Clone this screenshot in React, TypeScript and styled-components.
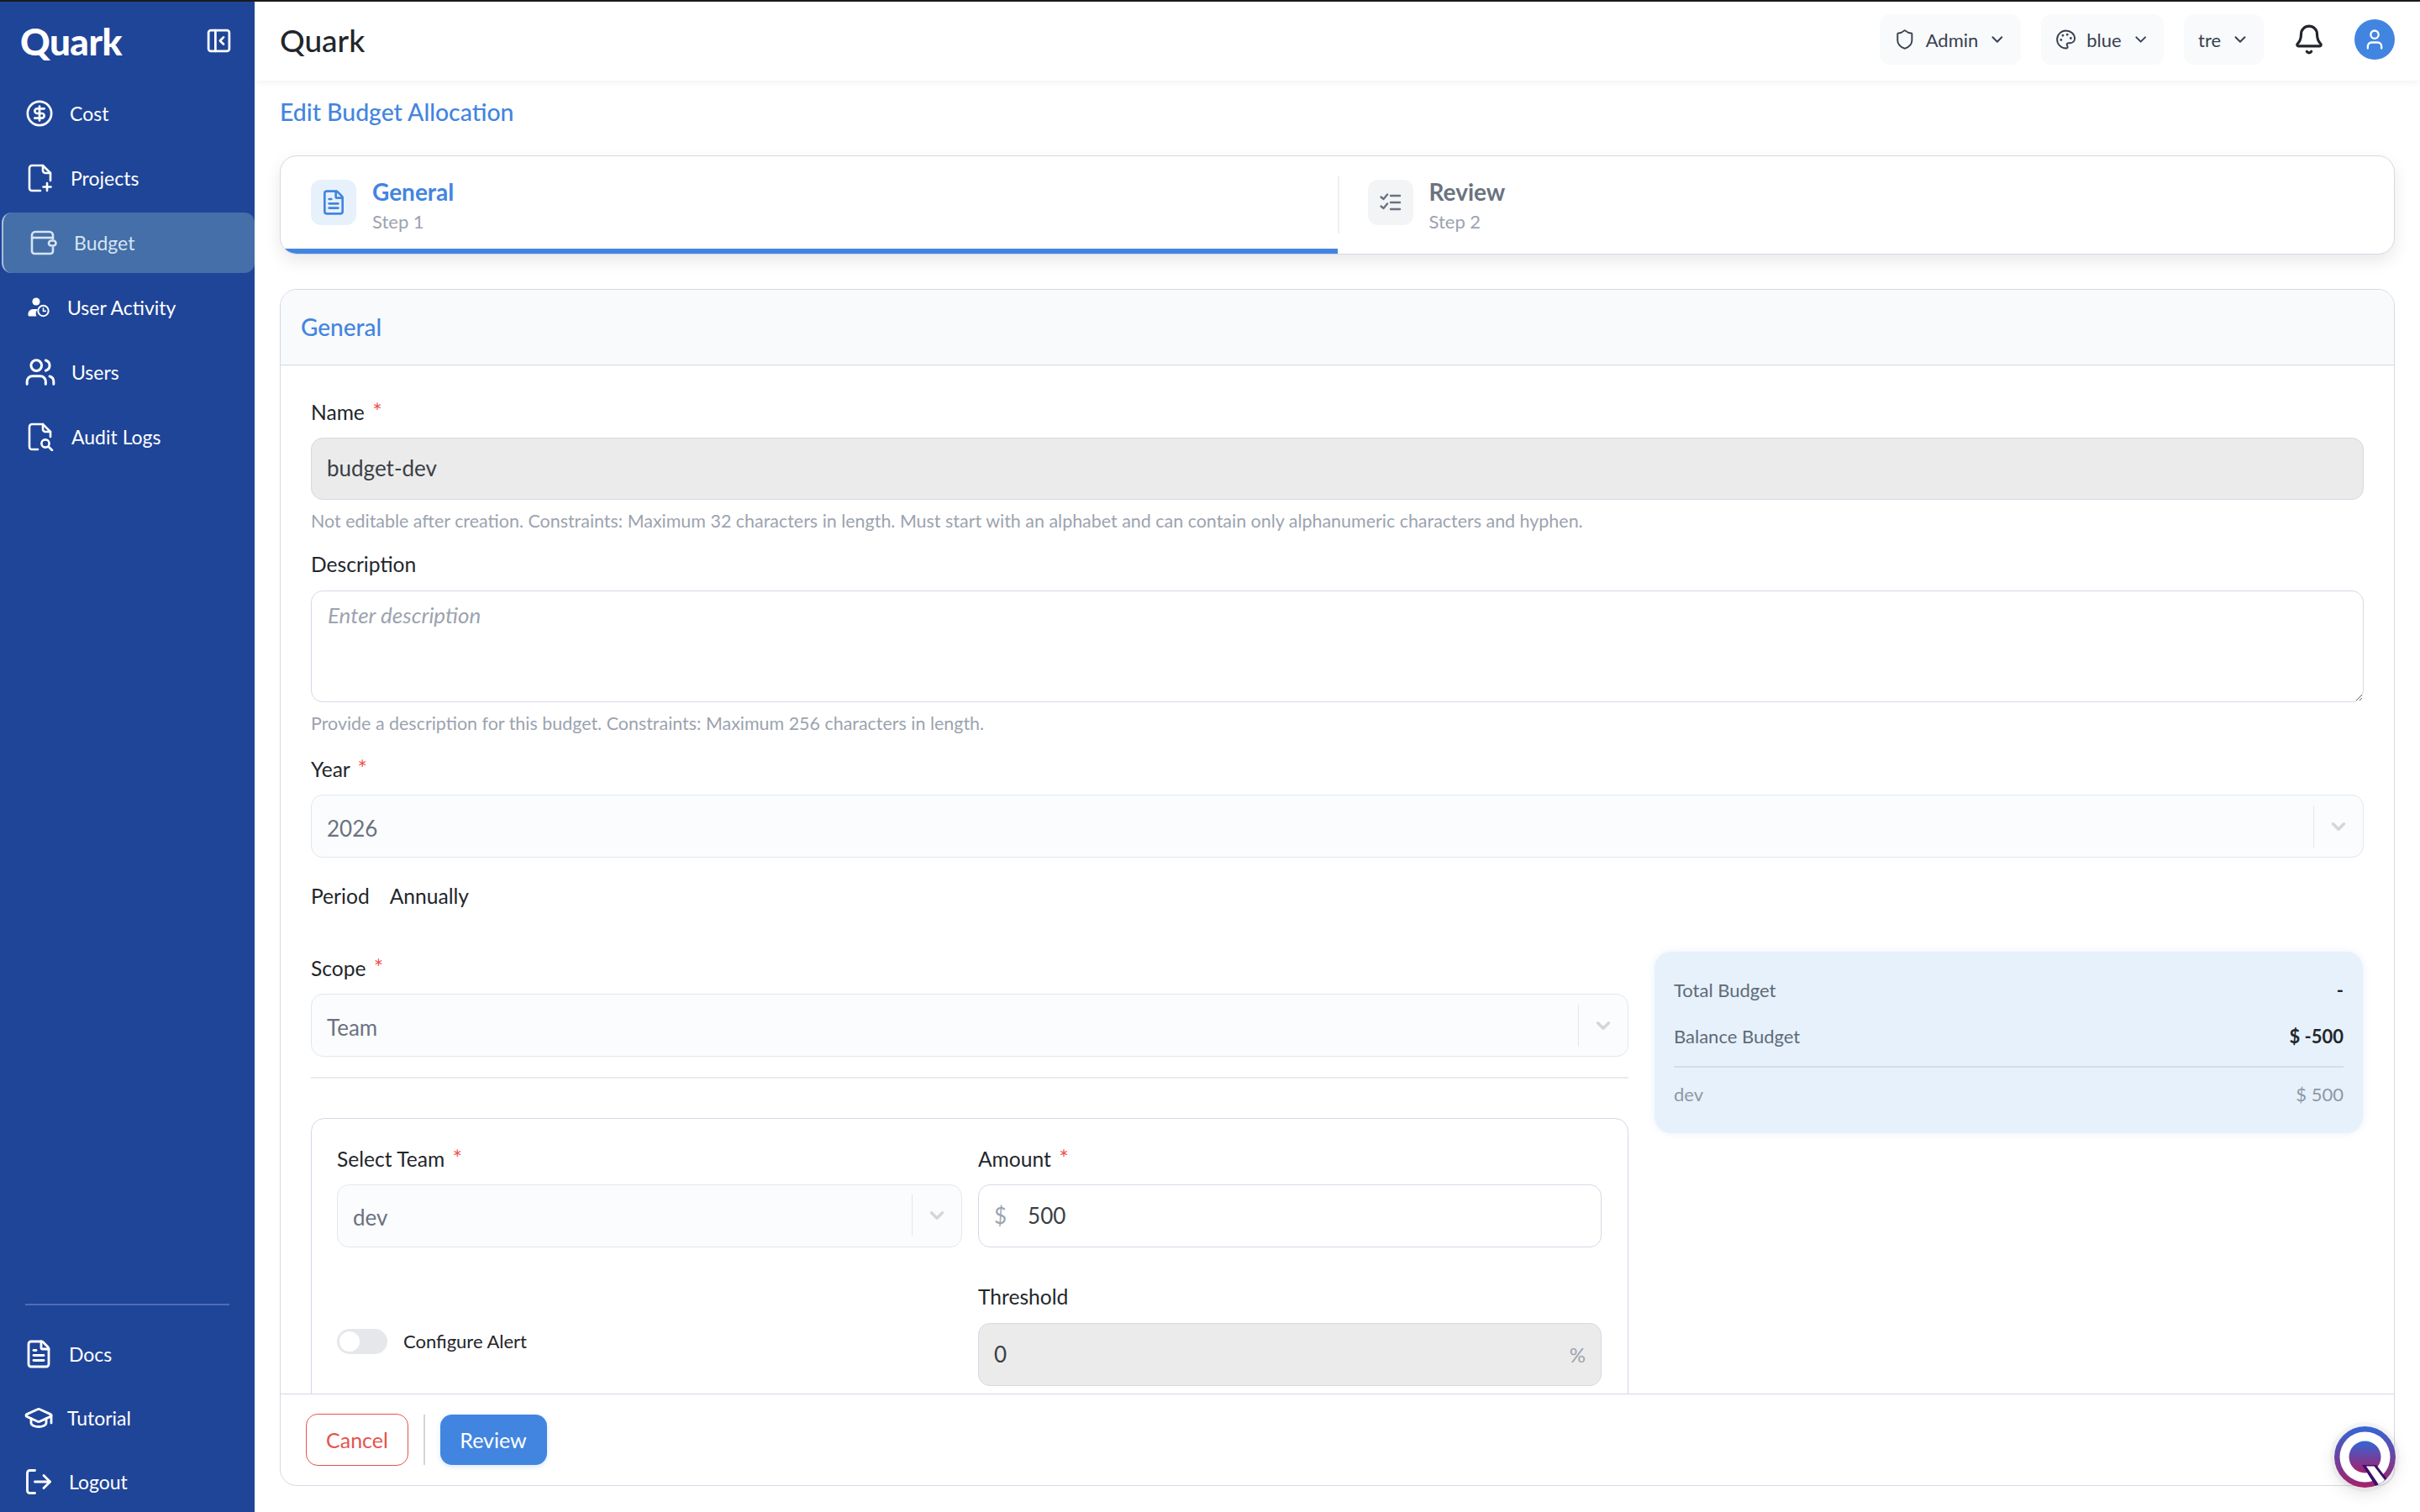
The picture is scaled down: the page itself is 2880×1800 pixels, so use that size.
import React from 'react'
import styled, { createGlobalStyle } from 'styled-components'
import {
  Bell,
  ChevronDown,
  CircleDollarSign,
  FileText,
  GraduationCap,
  LogOut,
  Palette,
  PanelLeftClose,
  Shield,
  User,
  Users
} from 'lucide-react'

const Colors = {
  navy: '#1f4598',
  blue: '#4285e0',
  border: '#d3d9e5',
  softBorder: '#e3e7ee',
  ink: '#22262b',
  disabled: '#ebebeb',
  muted: '#9ca3af',
  required: '#ef5350'
}

const GlobalStyle = createGlobalStyle`
  html, body {
    margin: 0;
    height: 100%;
    overflow: hidden;
    background: #fff;
  }
  body, input, textarea {
    font-family: 'Lato', 'Noto Sans', sans-serif;
  }
  * {
    box-sizing: border-box;
  }
`

/* icons the package has no match for */
const FilePlusIcon = () => (
  <svg width='30' height='34' viewBox='0 0 30 34' fill='none' stroke='currentColor' strokeWidth='2.6' strokeLinecap='round' strokeLinejoin='round'>
    <path d='M15 32H5a3 3 0 0 1-3-3V5a3 3 0 0 1 3-3h13l9 9v9' />
    <path d='M18 2v6a3 3 0 0 0 3 3h6' />
    <path d='M23 23v9M18.5 27.5h9' />
  </svg>
)

const FileSearchIcon = () => (
  <svg width='31' height='34' viewBox='0 0 31 34' fill='none' stroke='currentColor' strokeWidth='2.6' strokeLinecap='round' strokeLinejoin='round'>
    <path d='M12 32H5a3 3 0 0 1-3-3V5a3 3 0 0 1 3-3h13l9 9v6' />
    <path d='M18 2v6a3 3 0 0 0 3 3h6' />
    <circle cx='21' cy='25' r='4.6' />
    <path d='M25 29l4 4' />
  </svg>
)

const WalletIcon = () => (
  <svg width='32' height='30' viewBox='0 0 32 30' fill='none' stroke='currentColor' strokeWidth='2.6' strokeLinejoin='round'>
    <path d='M27 11V6a4 4 0 0 0-4-4H6a4 4 0 0 0-4 4v19a3 3 0 0 0 3 3h19a3 3 0 0 0 3-3v-5' />
    <path d='M2 9h25' />
    <rect x='22' y='12.5' width='8.5' height='6' rx='3' />
  </svg>
)

const UserClockIcon = () => (
  <svg width='26' height='24' viewBox='0 0 26 24' fill='none'>
    <circle cx='10' cy='5' r='4.6' fill='currentColor' />
    <path d='M0.5 21a6 6 0 0 1 6-7h5.5a8 8 0 0 0-1.6 8.5H2A1.5 1.5 0 0 1 0.5 21z' fill='currentColor' />
    <circle cx='18.5' cy='16' r='6.2' stroke='currentColor' strokeWidth='2' />
    <path d='M18.5 12.8V16.4h2.8' stroke='currentColor' strokeWidth='1.6' strokeLinecap='round' strokeLinejoin='round' />
  </svg>
)

const ChecklistIcon = () => (
  <svg width='26' height='22' viewBox='0 0 26 22' fill='none' stroke='currentColor' strokeWidth='2.4' strokeLinecap='round' strokeLinejoin='round'>
    <path d='M1.5 4.5l3 2.5 4.5-5.5' />
    <path d='M1.5 15.5l3 2.5 4.5-5.5' />
    <path d='M13 3h11M13 11h11M13 19h11' />
  </svg>
)

const QuarkBadge = () => (
  <svg width='73' height='73' viewBox='0 0 73 73'>
    <defs>
      <linearGradient id='quarkFill' x1='0' y1='0' x2='0' y2='1'>
        <stop offset='0' stopColor='#3366d6' />
        <stop offset='1' stopColor='#a5216b' />
      </linearGradient>
      <clipPath id='quarkClip'>
        <circle cx='36.5' cy='36.5' r='36.5' />
      </clipPath>
    </defs>
    <circle cx='36.5' cy='36.5' r='36.5' fill='url(#quarkFill)' />
    <circle cx='36.5' cy='36.5' r='30' fill='#fff' />
    <circle cx='36.5' cy='36.5' r='19' fill='url(#quarkFill)' />
    <g clipPath='url(#quarkClip)'>
      <path d='M33 46h17l13 17-5 6-7 5z' fill='#3b0f6b' />
      <path d='M38 47.5h9.5L60 64l-6 7z' fill='#fff' />
    </g>
  </svg>
)

const mainNav = [
  { label: 'Cost', icon: <CircleDollarSign size={34} strokeWidth={1.9} />, pad: 30, slot: 34, gap: 19 },
  { label: 'Projects', icon: <FilePlusIcon />, pad: 33, slot: 30, gap: 21 },
  { label: 'Budget', icon: <WalletIcon />, pad: 32, slot: 32, gap: 20, active: true },
  { label: 'User Activity', icon: <UserClockIcon />, pad: 33, slot: 26, gap: 21 },
  { label: 'Users', icon: <Users size={38} strokeWidth={1.9} />, pad: 29, slot: 38, gap: 18 },
  { label: 'Audit Logs', icon: <FileSearchIcon />, pad: 33, slot: 31, gap: 21 }
]

const footerNav = [
  { label: 'Docs', icon: <FileText size={36} strokeWidth={1.9} />, pad: 28, slot: 36, gap: 18 },
  { label: 'Tutorial', icon: <GraduationCap size={36} strokeWidth={1.9} />, pad: 28, slot: 36, gap: 16 },
  { label: 'Logout', icon: <LogOut size={36} strokeWidth={1.9} />, pad: 28, slot: 36, gap: 18 }
]

function SelectBox({ value }: { value: string }) {
  return (
    <SelectFrame>
      <SelectValue>{value}</SelectValue>
      <SelectArrow>
        <ChevronDown size={26} strokeWidth={3.2} />
      </SelectArrow>
    </SelectFrame>
  )
}

function App() {
  return (
    <>
      <GlobalStyle />
      <Shell>
        <Sidebar>
          <Brand>
            <BrandName>Quark</BrandName>
            <PanelLeftClose size={33} strokeWidth={2} />
          </Brand>
          <NavList>
            {mainNav.map((item) => (
              <NavItem key={item.label} $active={item.active} $pad={item.pad} $gap={item.gap}>
                <NavIcon $width={item.slot}>{item.icon}</NavIcon>
                {item.label}
              </NavItem>
            ))}
          </NavList>
          <SidebarFooter>
            <SidebarRule />
            {footerNav.map((item) => (
              <NavItem key={item.label} $pad={item.pad} $gap={item.gap}>
                <NavIcon $width={item.slot}>{item.icon}</NavIcon>
                {item.label}
              </NavItem>
            ))}
          </SidebarFooter>
        </Sidebar>

        <Main>
          <TopBar>
            <AppTitle>Quark</AppTitle>
            <TopActions>
              <Pill $width={168}>
                <Shield size={26} strokeWidth={1.8} />
                <span>Admin</span>
                <ChevronDown size={22} strokeWidth={2.2} />
              </Pill>
              <Pill $width={146}>
                <Palette size={26} strokeWidth={1.8} />
                <span>blue</span>
                <ChevronDown size={22} strokeWidth={2.2} />
              </Pill>
              <Pill $width={95}>
                <span>tre</span>
                <ChevronDown size={22} strokeWidth={2.2} />
              </Pill>
              <BellButton>
                <Bell size={38} strokeWidth={2} />
              </BellButton>
              <Avatar>
                <User size={28} strokeWidth={2} />
              </Avatar>
            </TopActions>
          </TopBar>

          <Content>
            <PageTitle>Edit Budget Allocation</PageTitle>

            <Stepper>
              <Step $current>
                <StepIcon $current>
                  <FileText size={32} strokeWidth={2} />
                </StepIcon>
                <StepText>
                  <StepName $current>General</StepName>
                  <StepNumber>Step 1</StepNumber>
                </StepText>
              </Step>
              <Step>
                <StepIcon>
                  <ChecklistIcon />
                </StepIcon>
                <StepText>
                  <StepName>Review</StepName>
                  <StepNumber>Step 2</StepNumber>
                </StepText>
              </Step>
            </Stepper>

            <FormCard>
              <FormHeader>General</FormHeader>
              <FormBody>
                <Label>
                  Name <Required>*</Required>
                </Label>
                <TextInput $disabled readOnly value='budget-dev' />
                <Help>
                  Not editable after creation. Constraints: Maximum 32 characters in length. Must start with an alphabet and can contain only alphanumeric characters and hyphen.
                </Help>

                <Label $top={22}>Description</Label>
                <TextArea placeholder='Enter description' />
                <Help>Provide a description for this budget. Constraints: Maximum 256 characters in length.</Help>

                <Label $top={24}>
                  Year <Required>*</Required>
                </Label>
                <SelectBox value='2026' />

                <PeriodRow>
                  <span>Period</span>
                  <span>Annually</span>
                </PeriodRow>

                <ScopeGrid>
                  <ScopeColumn>
                    <Label>
                      Scope <Required>*</Required>
                    </Label>
                    <SelectBox value='Team' />
                    <Rule />
                    <TeamBox>
                      <div>
                        <Label>
                          Select Team <Required>*</Required>
                        </Label>
                        <SelectBox value='dev' />
                      </div>
                      <div>
                        <Label>
                          Amount <Required>*</Required>
                        </Label>
                        <AffixField>
                          <Prefix>$</Prefix>
                          <AffixInput readOnly value='500' />
                        </AffixField>
                      </div>
                      <AlertToggle>
                        <Toggle />
                        Configure Alert
                      </AlertToggle>
                      <div>
                        <Label>Threshold</Label>
                        <AffixField $disabled>
                          <AffixInput readOnly value='0' $flush />
                          <Suffix>%</Suffix>
                        </AffixField>
                      </div>
                    </TeamBox>
                  </ScopeColumn>

                  <Summary>
                    <SummaryRow>
                      <span>Total Budget</span>
                      <SummaryValue>-</SummaryValue>
                    </SummaryRow>
                    <SummaryRow>
                      <span>Balance Budget</span>
                      <SummaryValue>$ -500</SummaryValue>
                    </SummaryRow>
                    <SummaryRule />
                    <SummaryRow $faint>
                      <span>dev</span>
                      <span>$ 500</span>
                    </SummaryRow>
                  </Summary>
                </ScopeGrid>
              </FormBody>
              <FormFooter>
                <CancelButton>Cancel</CancelButton>
                <FooterDivider />
                <ReviewButton>Review</ReviewButton>
              </FormFooter>
            </FormCard>
          </Content>
        </Main>

        <Badge>
          <QuarkBadge />
        </Badge>
      </Shell>
    </>
  )
}
export default App

const Shell = styled.div`
  display: flex;
  height: 100vh;
  border-top: 2px solid #1a1a1a;
  overflow: hidden;
`

const Sidebar = styled.aside`
  width: 303px;
  flex-shrink: 0;
  display: flex;
  flex-direction: column;
  background: ${Colors.navy};
  color: #fff;
`

const Brand = styled.div`
  height: 93px;
  flex-shrink: 0;
  display: flex;
  align-items: center;
  justify-content: space-between;
  padding: 0 26px 0 24px;
`

const BrandName = styled.div`
  font-size: 44px;
  font-weight: 900;
  letter-spacing: -0.5px;
`

const NavList = styled.nav`
  margin-top: 4px;
  display: flex;
  flex-direction: column;
  gap: 5px;
`

const NavItem = styled.div<{ $active?: boolean; $pad: number; $gap: number }>`
  height: 72px;
  display: flex;
  align-items: center;
  gap: ${(p) => p.$gap}px;
  padding-left: ${(p) => p.$pad}px;
  margin-left: ${(p) => (p.$active ? 2 : 0)}px;
  border-left: ${(p) => (p.$active ? '2px solid #a8bedd' : 'none')};
  border-radius: ${(p) => (p.$active ? '12px' : '0')};
  background: ${(p) => (p.$active ? '#446fa8' : 'transparent')};
  color: ${(p) => (p.$active ? '#d7e4f3' : '#fff')};
  font-size: 23px;
`

const NavIcon = styled.span<{ $width: number }>`
  width: ${(p) => p.$width}px;
  display: flex;
  justify-content: center;
  flex-shrink: 0;
`

const SidebarFooter = styled.div`
  margin-top: auto;
  display: flex;
  flex-direction: column;
  gap: 4px;
`

const SidebarRule = styled.div`
  height: 2px;
  margin: 0 30px 18px;
  background: #4f6fb3;
`

const Main = styled.div`
  flex: 1;
  min-width: 0;
  display: flex;
  flex-direction: column;
`

const TopBar = styled.header`
  height: 94px;
  flex-shrink: 0;
  display: flex;
  align-items: center;
  justify-content: space-between;
  padding: 0 30px 4px;
  background: #fff;
  box-shadow: 0 2px 8px rgba(0, 0, 0, 0.06);
  position: relative;
`

const AppTitle = styled.div`
  font-size: 37px;
  font-weight: 500;
  color: ${Colors.ink};
`

const TopActions = styled.div`
  display: flex;
  align-items: center;
  gap: 24px;
`

const Pill = styled.div<{ $width: number }>`
  width: ${(p) => p.$width}px;
  height: 60px;
  display: flex;
  align-items: center;
  gap: 12px;
  padding: 0 17px;
  border-radius: 12px;
  background: #f9fafb;
  color: #374151;
  font-size: 22px;

  svg:last-child {
    margin-left: auto;
  }
`

const BellButton = styled.div`
  display: flex;
  margin: 0 11px;
  color: #22262b;
`

const Avatar = styled.div`
  width: 48px;
  height: 48px;
  display: flex;
  align-items: center;
  justify-content: center;
  border-radius: 50%;
  background: ${Colors.blue};
  color: #fff;
`

const Content = styled.main`
  flex: 1;
  min-height: 0;
  display: flex;
  flex-direction: column;
  padding: 0 30px 31px;
`

const PageTitle = styled.h1`
  margin: 20px 0 35px;
  height: 34px;
  line-height: 34px;
  font-size: 28.4px;
  font-weight: 500;
  color: ${Colors.blue};
`

const Stepper = styled.div`
  flex-shrink: 0;
  height: 118px;
  display: flex;
  background: #fff;
  border: 1.5px solid ${Colors.border};
  border-radius: 20px;
  overflow: hidden;
  box-shadow: 0 8px 20px rgba(0, 0, 0, 0.09);
`

const Step = styled.div<{ $current?: boolean }>`
  flex: 1;
  position: relative;
  display: flex;
  align-items: center;
  gap: 19px;
  padding-left: 36px;
  border-bottom: 6px solid ${(p) => (p.$current ? Colors.blue : 'transparent')};

  &:last-child::before {
    content: '';
    position: absolute;
    left: 0;
    top: 23px;
    height: 69px;
    width: 2px;
    background: #eef0f3;
  }
`

const StepIcon = styled.div<{ $current?: boolean }>`
  width: 54px;
  height: 54px;
  display: flex;
  align-items: center;
  justify-content: center;
  border-radius: 12px;
  background: ${(p) => (p.$current ? '#e7f1fb' : '#f3f4f6')};
  color: ${(p) => (p.$current ? Colors.blue : '#6b7280')};
`

const StepText = styled.div`
  padding-top: 6px;
`

const StepName = styled.div<{ $current?: boolean }>`
  font-size: 28px;
  line-height: 34px;
  font-weight: 700;
  color: ${(p) => (p.$current ? Colors.blue : '#6b7280')};
`

const StepNumber = styled.div`
  margin-top: 5px;
  font-size: 22px;
  line-height: 28px;
  color: ${Colors.muted};
`

const FormCard = styled.section`
  flex: 1;
  min-height: 0;
  margin-top: 41px;
  display: flex;
  flex-direction: column;
  border: 1.5px solid ${Colors.border};
  border-radius: 20px;
  overflow: hidden;
  background: #fff;
`

const FormHeader = styled.div`
  height: 90px;
  flex-shrink: 0;
  display: flex;
  align-items: center;
  padding: 0 24px 2px;
  background: #f9fafc;
  border-bottom: 1.5px solid ${Colors.border};
  font-size: 28px;
  font-weight: 500;
  color: ${Colors.blue};
`

const FormBody = styled.div`
  flex: 1;
  min-height: 0;
  overflow: hidden;
  padding: 40px 36px 0;
`

const FormFooter = styled.div`
  height: 109px;
  flex-shrink: 0;
  display: flex;
  align-items: center;
  padding: 0 30px;
  border-top: 1.5px solid ${Colors.border};
`

const Label = styled.div<{ $top?: number }>`
  height: 30px;
  line-height: 30px;
  margin: ${(p) => p.$top || 0}px 0 16px;
  font-size: 24.6px;
  color: ${Colors.ink};
`

const Required = styled.span`
  margin-left: 3px;
  font-size: 27px;
  color: ${Colors.required};
`

const TextInput = styled.input<{ $disabled?: boolean }>`
  display: block;
  width: 100%;
  height: 74px;
  padding: 0 18px 2px;
  border: 1.5px solid ${Colors.border};
  border-radius: 14px;
  outline: none;
  background: ${(p) => (p.$disabled ? Colors.disabled : '#fff')};
  font-size: 26px;
  color: #3a3f46;
`

const TextArea = styled.textarea`
  display: block;
  width: 100%;
  height: 133px;
  padding: 12px 19px;
  border: 1.5px solid ${Colors.border};
  border-radius: 14px;
  outline: none;
  font-size: 26px;

  &::placeholder {
    font-style: italic;
    color: ${Colors.muted};
  }
`

const Help = styled.div`
  height: 30px;
  line-height: 30px;
  margin-top: 10px;
  font-size: 21.45px;
  color: ${Colors.muted};
`

const SelectFrame = styled.div`
  height: 75px;
  display: flex;
  align-items: center;
  background: #fbfcfd;
  border: 1.5px solid ${Colors.softBorder};
  border-radius: 14px;
`

const SelectValue = styled.div`
  flex: 1;
  padding: 4px 0 0 18px;
  font-size: 26px;
  color: #6b7280;
`

const SelectArrow = styled.div`
  width: 59px;
  height: 50px;
  display: flex;
  align-items: center;
  justify-content: center;
  border-left: 1.5px solid ${Colors.softBorder};
  color: #d6d6d6;
`

const PeriodRow = styled.div`
  display: flex;
  gap: 24px;
  height: 30px;
  line-height: 30px;
  margin-top: 31px;
  font-size: 24.6px;
  color: ${Colors.ink};
`

const ScopeGrid = styled.div`
  margin-top: 51px;
  display: grid;
  grid-template-columns: 1568px 843px;
  gap: 31px;
  align-items: start;
`

const ScopeColumn = styled.div`
  padding-top: 4px;
`

const Rule = styled.div`
  height: 1.5px;
  margin: 24px 0 47px;
  background: #e8ebf0;
`

const TeamBox = styled.div`
  height: 480px;
  padding: 32px 30px 0;
  display: grid;
  grid-template-columns: 744px 742px;
  column-gap: 19px;
  row-gap: 44px;
  align-content: start;
  border: 1.5px solid ${Colors.border};
  border-radius: 16px;
`

const AffixField = styled.div<{ $disabled?: boolean }>`
  height: 75px;
  display: flex;
  align-items: center;
  padding: 0 18px;
  border: 1.5px solid ${Colors.border};
  border-radius: 14px;
  background: ${(p) => (p.$disabled ? Colors.disabled : '#fff')};
`

const Prefix = styled.span`
  font-size: 26px;
  color: ${Colors.muted};
`

const Suffix = styled.span`
  font-size: 24px;
  color: ${Colors.muted};
`

const AffixInput = styled.input<{ $flush?: boolean }>`
  flex: 1;
  min-width: 0;
  padding: 0 0 0 ${(p) => (p.$flush ? 0 : 25)}px;
  border: 0;
  outline: none;
  background: transparent;
  font-size: 26px;
  color: #3a3f46;
`

const AlertToggle = styled.div`
  display: flex;
  align-items: center;
  gap: 19px;
  align-self: center;
  padding-top: 15px;
  font-size: 22px;
  color: ${Colors.ink};
`

const Toggle = styled.div`
  width: 60px;
  height: 30px;
  display: flex;
  align-items: center;
  padding-left: 3px;
  border-radius: 15px;
  background: #e5e7eb;

  &::before {
    content: '';
    width: 24px;
    height: 24px;
    border-radius: 50%;
    background: #fff;
  }
`

const Summary = styled.aside`
  height: 216px;
  padding: 27px 23px 0;
  background: #e7f1fb;
  border-radius: 20px;
  box-shadow: 0 0 10px rgba(66, 133, 224, 0.12);
`

const SummaryRow = styled.div<{ $faint?: boolean }>`
  height: 36px;
  margin-bottom: 19px;
  display: flex;
  align-items: center;
  justify-content: space-between;
  font-size: 22px;
  color: ${(p) => (p.$faint ? '#8b98a5' : '#5d6b78')};
`

const SummaryValue = styled.span`
  font-weight: 700;
  color: ${Colors.ink};
`

const SummaryRule = styled.div`
  height: 1.5px;
  margin: -1px 0 14px;
  background: #d3dde8;
`

const CancelButton = styled.button`
  width: 122px;
  height: 62px;
  border: 1.5px solid #e5534f;
  border-radius: 14px;
  background: #fff;
  font-family: inherit;
  font-size: 25px;
  color: #e5534f;
`

const FooterDivider = styled.div`
  width: 1.5px;
  height: 60px;
  margin: 0 18px;
  background: #d3d6db;
`

const ReviewButton = styled.button`
  width: 127px;
  height: 60px;
  border: 0;
  border-radius: 14px;
  background: ${Colors.blue};
  box-shadow: 0 2px 6px rgba(66, 133, 224, 0.2);
  font-family: inherit;
  font-size: 25px;
  color: #fff;
`

const Badge = styled.div`
  position: fixed;
  right: 29px;
  bottom: 29px;
  width: 73px;
  height: 73px;
  display: flex;
  border-radius: 50%;
  box-shadow: 0 0 0 5px rgba(0, 0, 0, 0.03), 0 6px 20px rgba(0, 0, 0, 0.12);
`
